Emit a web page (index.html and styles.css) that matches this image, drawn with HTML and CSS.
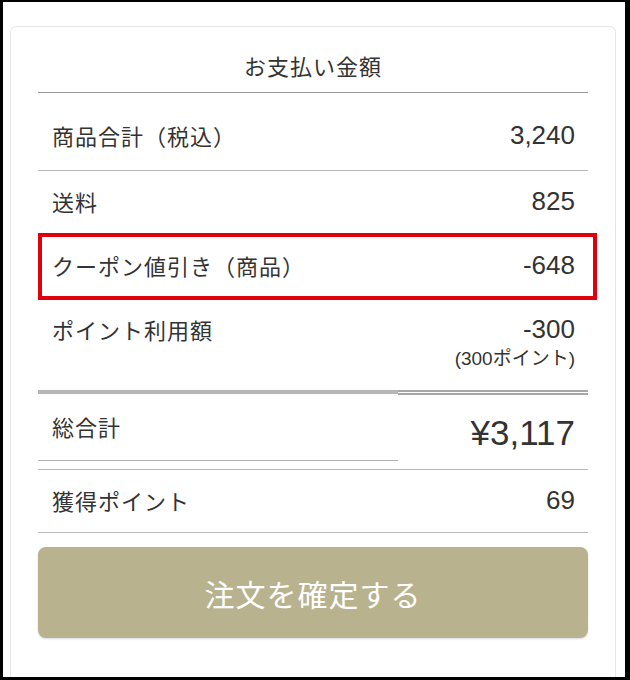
FILE: index.html
```html
<!DOCTYPE html>
<html lang="ja">
<head>
<meta charset="utf-8">
<link rel="stylesheet" href="styles.css">
</head>
<body>
<div class="frame">
  <div class="card">
    <div class="card-title">お支払い金額</div>
    <div class="row row-first">
      <span class="label">商品合計（税込）</span>
      <span class="num">3,240</span>
    </div>
    <div class="row">
      <span class="label">送料</span>
      <span class="num">825</span>
    </div>
    <div class="row row-coupon">
      <span class="label">クーポン値引き（商品）</span>
      <span class="num">-648</span>
    </div>
    <div class="row row-points">
      <span class="label">ポイント利用額</span>
      <div class="num-col">
        <span class="num">-300</span>
        <span class="num-sub">(300ポイント)</span>
      </div>
    </div>
    <div class="total-row">
      <div class="total-label"><span class="label">総合計</span></div>
      <div class="total-value"><span class="num big">¥3,117</span></div>
    </div>
    <div class="row">
      <span class="label">獲得ポイント</span>
      <span class="num">69</span>
    </div>
    <button class="confirm" type="button">注文を確定する</button>
  </div>
</div>
</body>
</html>
```
FILE: styles.css
```css
* { box-sizing: border-box; }
html, body { margin: 0; padding: 0; background: #000; }
body {
  font-family: "Noto Sans CJK JP", "Noto Sans", sans-serif;
  color: #333;
}
.frame {
  margin: 2px 5px 3px 3px;
  height: 675px;
  background: #fff;
  padding: 24px 9px 0 7px;
  overflow: hidden;
}
.card {
  height: 651px;
  border: 1px solid #e6e6e6;
  border-bottom: none;
  border-radius: 6px 6px 0 0;
  padding: 0 27px;
}
.card-title {
  height: 66px;
  display: flex;
  align-items: center;
  justify-content: center;
  font-size: 22px;
  letter-spacing: 1px;
  border-bottom: 1px solid #9a9a9a;
  padding-top: 10px;
}
.row {
  display: flex;
  justify-content: space-between;
  align-items: center;
  height: 63px;
  padding: 0 13px 2px 14px;
  border-bottom: 1px solid #b8b8b8;
}
.row-first { height: 78px; padding-top: 8px; }
.label { font-size: 22px; line-height: 30px; letter-spacing: 1px; }
.num {
  font-family: "Liberation Sans", "Noto Sans CJK JP", sans-serif;
  font-size: 26px;
  line-height: 30px;
}
.row-coupon { position: relative; height: 64px; }
.row-coupon::after {
  content: "";
  position: absolute;
  top: -1px;
  left: 0;
  right: -9px;
  bottom: -3px;
  border: 4px solid #e0000b;
}
.row-points {
  height: 92px;
  align-items: flex-start;
  padding-top: 16px;
  border-bottom: none;
}
.num-col { display: flex; flex-direction: column; align-items: flex-end; }
.num-sub {
  font-family: "Liberation Sans", "Noto Sans CJK JP", sans-serif;
  font-size: 19px;
  line-height: 30px;
}
.total-row {
  display: flex;
  align-items: flex-start;
  border-bottom: 1px solid #b8b8b8;
  height: 80px;
}
.total-label {
  width: 360px;
  height: 71px;
  display: flex;
  align-items: center;
  padding-left: 14px;
  padding-bottom: 2px;
  border-top: 4px solid #b6b6b6;
  border-bottom: 1px solid #b0b0b0;
}
.total-value {
  flex: 1;
  height: 79px;
  display: flex;
  align-items: center;
  justify-content: flex-end;
  padding-right: 13px;
  padding-top: 1px;
  border-top: 5px double #a8a8a8;
}
.big { font-size: 35px; line-height: 42px; }
.confirm {
  display: block;
  width: 100%;
  height: 91px;
  margin-top: 14px;
  border: none;
  border-radius: 8px;
  background: #b8b28f;
  color: #fff;
  font-family: "Noto Sans CJK JP", sans-serif;
  font-size: 30px;
  letter-spacing: 1px;
  box-shadow: 0 1px 2px rgba(0,0,0,0.15);
}
```
